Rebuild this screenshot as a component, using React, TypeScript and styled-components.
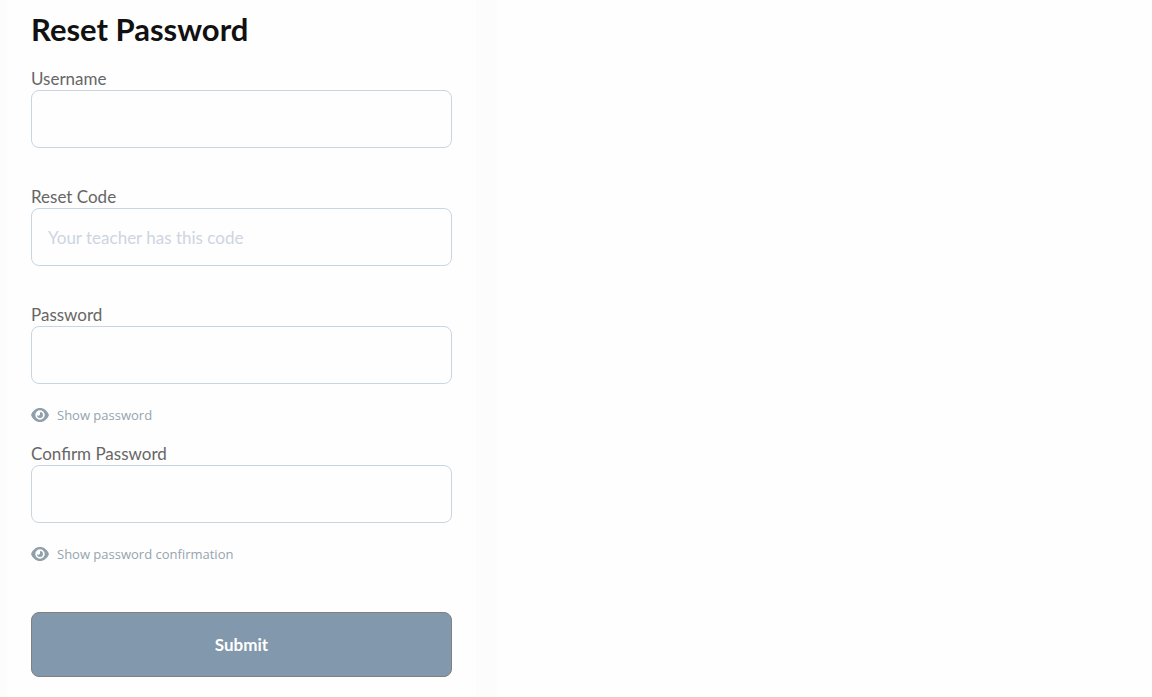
import React, { useId, useState } from "react";
import styled, { createGlobalStyle } from "styled-components";

const GlobalStyle = createGlobalStyle`
  *, *::before, *::after { box-sizing: border-box; }
  body {
    margin: 0;
    background: #fefefe;
    color: #666;
    font-family: Lato, "Liberation Sans", sans-serif;
    font-size: 17px;
    line-height: 24px;
  }
`;

const Page = styled.main`
  min-height: 100vh;
  max-width: 497px;
  padding: 0 21px 0 7px;
  background: #fcfcfc;
`;

const Card = styled.form`
  min-height: 100vh;
  padding: 9px 24px 20px;
  background: #fefefe;
`;

const Title = styled.h1`
  margin: 0 0 19px;
  color: #111;
  font-size: 31px;
  font-weight: 700;
  line-height: 40px;
`;

const Field = styled.div<{ $gap: number }>`
  display: flex;
  flex-direction: column;
  margin-bottom: ${(p) => p.$gap}px;
`;

const Label = styled.label`
  color: #666;
  line-height: 22px;
`;

const Input = styled.input`
  width: 100%;
  height: 58px;
  padding: 0 16px;
  border: 1px solid #c9d5e0;
  border-radius: 8px;
  background: #fefefe;
  color: #333;
  font: inherit;
  outline: none;
  &::placeholder { color: #cdd5e1; opacity: 1; }
`;

const Toggle = styled.button`
  display: flex;
  align-items: center;
  gap: 8px;
  margin-top: 21px;
  padding: 0;
  border: 0;
  background: none;
  color: #95a4af;
  font-family: "Open Sans", "Noto Sans", sans-serif;
  font-size: 13px;
  font-weight: 400;
  line-height: 20px;
  cursor: pointer;
`;

const Eye = styled.svg`
  width: 18px;
  height: 14px;
  fill: #90a0ab;
`;

const Submit = styled.button`
  width: 100%;
  height: 65px;
  border: 1px solid #808080;
  border-radius: 8px;
  background: #8298ac;
  color: #fff;
  font: inherit;
  font-weight: 700;
  cursor: pointer;
`;

const EyeIcon = () => (
  <Eye viewBox="0 0 18 14" aria-hidden="true">
    <path
      fillRule="evenodd"
      d="M9 0C5 0 1.600 2.700 0 7c1.600 4.300 5 7 9 7s7.400-2.700 9-7C16.400 2.700 13 0 9 0zM9 2.300a4.700 4.700 0 1 1 0 9.400 4.700 4.700 0 0 1 0-9.400z"
    />
    <path d="M9 4a3 3 0 1 1-3 3 1.700 1.700 0 0 0 3-1.500Q9.300 4.700 9 4z" />
  </Eye>
);

type FieldProps = {
  label: string;
  gap: number;
  placeholder?: string;
  toggle?: string;
};

function FormField({ label, gap, placeholder, toggle }: FieldProps) {
  const id = useId();
  const [visible, setVisible] = useState(false);
  return (
    <Field $gap={gap}>
      <Label htmlFor={id}>{label}</Label>
      <Input id={id} type={toggle && !visible ? "password" : "text"} placeholder={placeholder} />
      {toggle && (
        <Toggle type="button" aria-pressed={visible} onClick={() => setVisible(!visible)}>
          <EyeIcon />
          {toggle}
        </Toggle>
      )}
    </Field>
  );
}

export default function App() {
  return (
    <>
      <GlobalStyle />
      <Page>
        <Card onSubmit={(e) => e.preventDefault()}>
          <Title>Reset Password</Title>
          <FormField label="Username" gap={38} />
          <FormField label="Reset Code" gap={38} placeholder="Your teacher has this code" />
          <FormField label="Password" gap={18} toggle="Show password" />
          <FormField label="Confirm Password" gap={48} toggle="Show password confirmation" />
          <Submit type="submit">Submit</Submit>
        </Card>
      </Page>
    </>
  );
}
